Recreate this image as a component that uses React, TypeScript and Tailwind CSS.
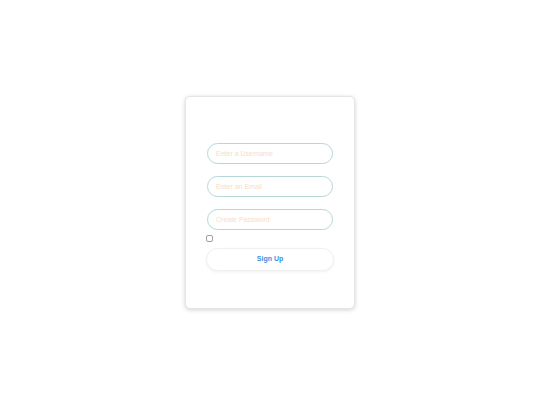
export default function App() {
  return (
    <div className="flex h-[405px] w-[540px] items-center justify-center bg-white font-['Liberation_Sans',Arial,sans-serif]">
      <div className="flex h-[213px] w-[170px] flex-col rounded-[5px] border border-[#e6e6e6] bg-white px-[20px] pt-[46px] shadow-[0_1px_4px_rgba(0,0,0,0.18)]">
        <form className="flex flex-col" onSubmit={(e) => e.preventDefault()}>
          <input
            type="text"
            placeholder="Enter a Username"
            className="mx-px h-[21px] rounded-full border border-[#b7d6d6] px-[8px] text-[7px] outline-none placeholder:text-[#fbdcbd]"
          />
          <input
            type="email"
            placeholder="Enter an Email"
            className="mx-px mt-[12px] h-[21px] rounded-full border border-[#b7d6d6] px-[8px] text-[7px] outline-none placeholder:text-[#fbdcbd]"
          />
          <input
            type="password"
            placeholder="Create Password"
            className="mx-px mt-[12px] h-[21px] rounded-full border border-[#b7d6d6] px-[8px] text-[7px] outline-none placeholder:text-[#fbdcbd]"
          />
          <div className="mt-[5px] flex">
            <span className="h-[7px] w-[7px] rounded-[2px] border border-[#a0a0a0] bg-white" />
          </div>
          <button
            type="submit"
            className="mt-[6px] h-[23px] rounded-full border border-[#f0f0f0] bg-white text-[7px] font-bold text-[#3d8fe0] shadow-[0_1px_3px_rgba(0,0,0,0.06)]"
          >
            Sign Up
          </button>
        </form>
      </div>
    </div>
  );
}
